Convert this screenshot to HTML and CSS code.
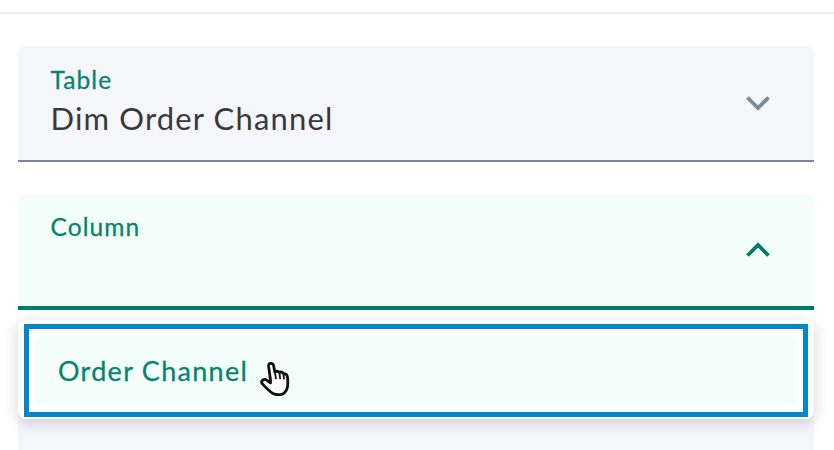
FILE: index.html
```html
<!DOCTYPE html>
<html>
<head>
  <title>Filter fields</title>
  <link rel="stylesheet" href="styles.css">
</head>
<body>
  <div class="top-bar"></div>

  <div class="fields">
    <div class="field">
      <div class="field-text">
        <div class="field-label">Table</div>
        <div class="field-value">Dim Order Channel</div>
      </div>
      <svg class="chevron" width="26" height="18" viewBox="0 0 26 18">
        <path d="M2.5 3.5 L13 14 L23.5 3.5" />
      </svg>
    </div>

    <div class="field-wrap">
      <div class="field field-open">
        <div class="field-text">
          <div class="field-label">Column</div>
          <div class="field-value">&nbsp;</div>
        </div>
        <svg class="chevron" width="26" height="18" viewBox="0 0 26 18">
          <path d="M2.5 14.5 L13 4 L23.5 14.5" />
        </svg>
      </div>

      <div class="menu">
        <div class="menu-frame">
          <div class="menu-item">
            <span>Order Channel</span>
            <svg class="hand" width="30" height="34" viewBox="0 0 30 34">
              <path class="hand-body" d="M10.5 18 L8.6 4.2 Q8.4 1.6 10.8 1.4 Q13.2 1.3 13.7 4 L14.8 10 Q17.5 8.4 19.2 10.4 Q21.8 9.2 23.4 11.6 Q26.6 11.2 27.4 14.6 Q28.2 20 27.4 25.4 Q25.8 31.4 21 32.6 Q16.5 33.2 13 31.6 Q8 28.2 2 21.4 Q0.9 19.4 2.8 18 Q4.8 16.6 7 18.4 L10.5 21 Z" />
              <path class="hand-line" d="M15 10.4 L16 17 M19.4 10.6 L20.2 17 M23.5 11.8 L24 17.4" />
            </svg>
          </div>
        </div>
      </div>
    </div>

    <div class="field"></div>
  </div>
</body>
</html>
```

FILE: styles.css
```css
html, body {
  height: 100%;
  overflow: hidden;
}

body {
  margin: 0;
  font-family: "Lato", "Liberation Sans", sans-serif;
  background-color: #fff;
}

.top-bar {
  height: 12px;
  border-bottom: 2px solid #ecedf3;
}

.fields {
  display: flex;
  flex-direction: column;
  gap: 32px;
  padding: 32px 20px 0 18px;
}

.field {
  display: flex;
  align-items: center;
  justify-content: space-between;
  flex: none;
  height: 114px;
  padding: 0 43px 0 32.5px;
  border-radius: 8px 8px 0 0;
  border-bottom: 2px solid #7b8898;
  background-color: #f5f6fa;
}

.field-text {
  display: flex;
  flex-direction: column;
  gap: 6px;
  padding-bottom: 4px;
}

.field-label {
  font-size: 24.5px;
  line-height: 28px;
  color: #0a8270;
  letter-spacing: 1.1px;
  -webkit-text-stroke: 0.3px #0a8270;
}

.field-value {
  font-size: 31px;
  line-height: 37px;
  color: #38393b;
  letter-spacing: 1.15px;
}

.chevron path {
  fill: none;
  stroke: #7b8898;
  stroke-width: 3.8;
}

.field-wrap {
  position: relative;
  z-index: 1;
}

.field-open {
  height: 112px;
  border-bottom: 4px solid #007e6a;
  background-color: #f3fefa;
}

.field-open .chevron path {
  stroke: #007e6a;
}

/* dropdown hangs over the next field */
.menu {
  position: absolute;
  top: 126px;
  left: 0;
  right: 0;
  box-sizing: border-box;
  height: 99px;
  padding: 4px 6px 2px 5.5px;
  border-radius: 8px;
  background-color: #fff;
  box-shadow: 0 4px 16px rgba(40, 45, 60, 0.2);
}

.menu-frame {
  padding: 7px 5px 8px 5.5px;
  border: 5px solid #0287cd;
}

.menu-item {
  display: flex;
  align-items: center;
  height: 68px;
  padding-left: 24px;
  border-radius: 8px;
  background-color: #f3fefa;
  font-size: 27px;
  color: #0a8270;
  letter-spacing: 1.28px;
  -webkit-text-stroke: 0.3px #0a8270;
}

.hand {
  margin: 17px 0 0 12px;
}

.hand-body {
  fill: #fff;
  stroke: #111;
  stroke-width: 2.8;
  stroke-linejoin: round;
}

.hand-line {
  fill: none;
  stroke: #111;
  stroke-width: 1.8;
}
```
